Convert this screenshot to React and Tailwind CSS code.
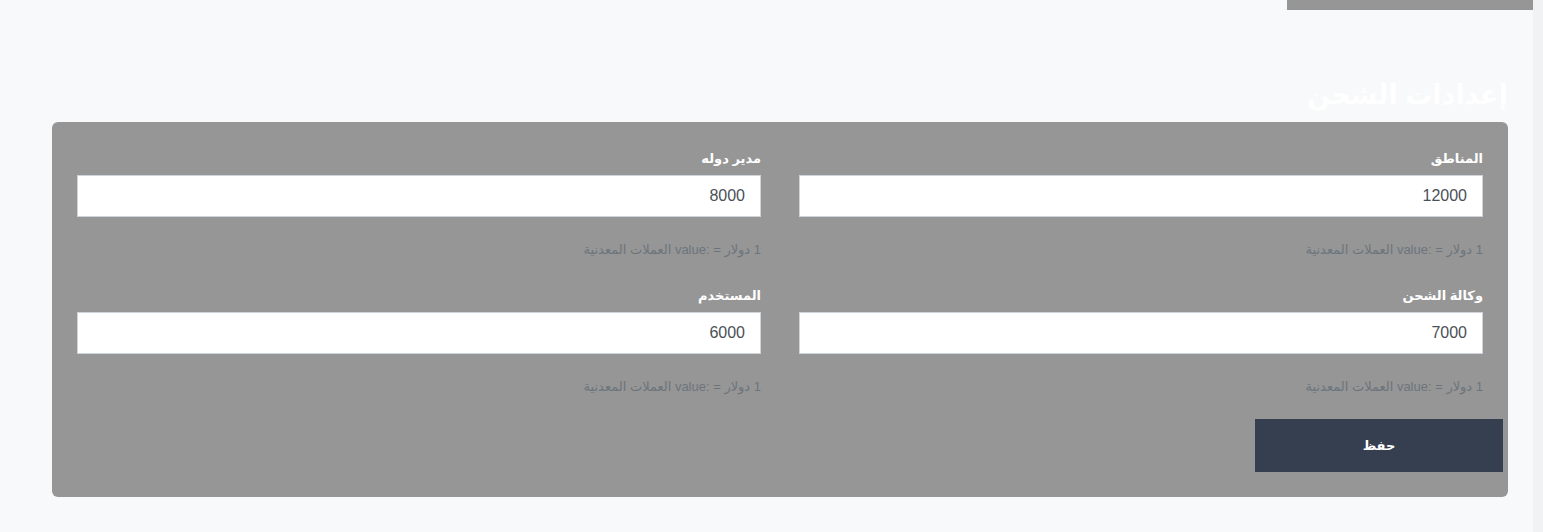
import React from "react";

const fields = [
  { label: "المناطق", value: "12000" },
  { label: "مدير دوله", value: "8000" },
  { label: "وكالة الشحن", value: "7000" },
  { label: "المستخدم", value: "6000" },
];

const Field = ({ label, value }) => {
  return (
    <div className="flex flex-col">
      <label className="mt-[2px] text-[13px] leading-[20px] font-bold text-white mb-[6px]">
        {label}
      </label>
      <input
        type="text"
        defaultValue={value}
        className="h-[42px] w-full bg-white border border-[#ced4da] px-[15px] text-[16px] text-[#495057] outline-none"
      />
      <small className="block mt-[24px] text-[13px] leading-[18px] text-[#6c757d]">
        1 دولار = :value العملات المعدنية
      </small>
    </div>
  );
};

const App = () => {
  return (
    <div
      dir="rtl"
      className="flex min-h-[532px] w-full bg-[#f8f9fa]"
      style={{ fontFamily: '"Liberation Sans", "DejaVu Sans", sans-serif' }}
    >
      <div className="w-[10px] bg-[#f1f2f4]" />
      <div className="flex-1 flex flex-col">
        <div className="flex justify-start">
          <div className="w-[246px] h-[10px] bg-[#969696]" />
        </div>
        <div className="pr-[25px] pl-[52px]">
          <h2 className="mt-[66px] mb-[8px] text-[27px] leading-[38px] font-semibold text-white">
            إعدادات الشحن
          </h2>
          <div className="bg-[#969696] rounded-[6px] p-[25px]">
            <div className="grid grid-cols-2 gap-x-[38px] gap-y-[25px]">
              {fields.map((f, index) => (
                <Field key={index} label={f.label} value={f.value} />
              ))}
            </div>
            <div className="flex justify-start mt-[23px] -mr-[20px]">
              <button className="w-[248px] h-[53px] bg-[#363f50] text-white text-[13px] font-bold">
                حفظ
              </button>
            </div>
          </div>
        </div>
      </div>
    </div>
  );
};

export default App;
